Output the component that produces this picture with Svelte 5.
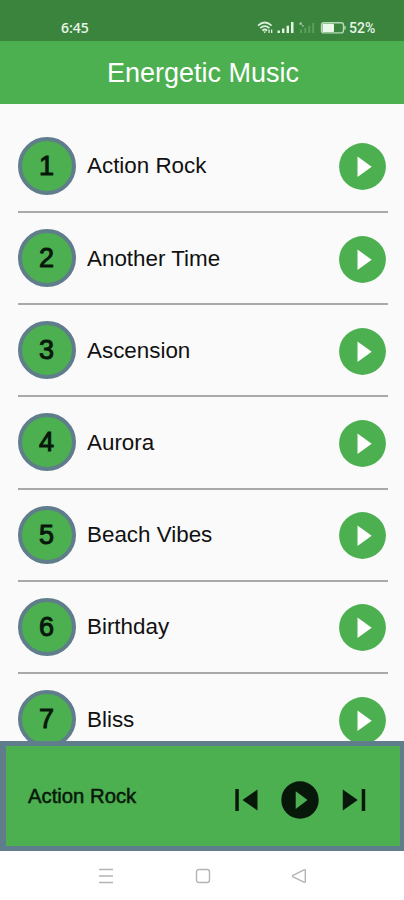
<script lang="ts">
  interface Track {
    id: number;
    title: string;
  }

  const tracks: Track[] = [
    'Action Rock',
    'Another Time',
    'Ascension',
    'Aurora',
    'Beach Vibes',
    'Birthday',
    'Bliss',
  ].map((title, i) => ({ id: i + 1, title }));

  let current = $state(tracks[0]);

  function step(delta: number) {
    const next = (current.id - 1 + delta + tracks.length) % tracks.length;
    current = tracks[next];
  }
</script>

<div class="screen">
  <div class="status-bar">
    <span class="clock">6:45</span>
    <svg class="indicators" width="90" height="16" viewBox="0 0 90 16" aria-hidden="true">
      <!-- wifi -->
      <g fill="none" stroke="#d9efd9" stroke-width="1.7">
        <path d="M1 5.6Q7.8-.6 14.6 5.6" />
        <path d="M3.2 8.2Q7.8 4 12.4 8.2" />
        <path d="M5.4 10.6Q7.8 8.4 10.2 10.6" />
      </g>
      <path d="M6.3 11.4h3L7.8 13.2zM11.4 9.5h1.3v3.6h-1.3zM14 9.5h1.3v3.6H14z" fill="#d9efd9" />
      <!-- signal, sim 1 -->
      <path d="M20.5 10.5h2.4V13h-2.4zM25 8.5h2.4V13H25zM29.6 5.8H32V13h-2.4zM34 2H36.5V13H34z" fill="#e1f3e1" />
      <!-- signal, sim 2 -->
      <path d="M42.5 2.5h2.3v2.3h-2.3zM45 5h1.6v1.6H45z" fill="#a8d0a8" />
      <path d="M43 9.5h2V13h-2zM47.3 8h2v5h-2zM51.3 5.8h2V13h-2zM55.2 3h2v10h-2z" fill="#5c9f5d" />
      <!-- battery -->
      <rect x="64.5" y="2.7" width="22" height="10.2" rx="2.4" fill="none" stroke="#b5dab5" stroke-width="1.4" />
      <rect x="65.5" y="3.7" width="11.5" height="8.2" rx="1" fill="#edf8ed" />
      <path d="M88 6v3.6" stroke="#b5dab5" stroke-width="1.4" />
    </svg>
    <span class="battery">52%</span>
  </div>

  <header class="app-bar">
    <h1>Energetic Music</h1>
  </header>

  <main class="track-list">
    {#each tracks as track (track.id)}
      <div class="track">
        <span class="number">{track.id}</span>
        <span class="title">{track.title}</span>
        <button class="play" aria-label="Play {track.title}" onclick={() => (current = track)}>
          <svg width="47" height="47" viewBox="0 0 47 47">
            <circle cx="23.5" cy="23.5" r="23.4" fill="#4caf50" />
            <path d="M18.5 13.5v20.6L32.7 23.8z" fill="#fff" />
          </svg>
        </button>
      </div>
    {/each}
  </main>

  <footer class="player">
    <span class="now-playing">{current.title}</span>
    <div class="controls">
      <button aria-label="Previous" onclick={() => step(-1)}>
        <svg width="24" height="24" viewBox="0 0 24 24" fill="#07180a">
          <path d="M1.3 1H4.8v22H1.3zM23.5 1.5v21L8.5 12z" />
        </svg>
      </button>
      <button aria-label="Play">
        <svg width="38" height="38" viewBox="0 0 38 38" fill="#07180a" fill-rule="evenodd">
          <path d="M19 .3a18.7 18.7 0 1 0 0 37.4a18.7 18.7 0 1 0 0-37.4zM14.7 10.3v17.6L26.5 19.1z" />
        </svg>
      </button>
      <button aria-label="Next" onclick={() => step(1)}>
        <svg width="24" height="24" viewBox="0 0 24 24" fill="#07180a">
          <path d="M.8 1.5v21L15.7 12zM19.7 1h3.5v22h-3.5z" />
        </svg>
      </button>
    </div>
  </footer>

  <nav class="system-nav">
    <svg width="16" height="16" viewBox="0 0 16 16">
      <path d="M1 1.5h14M1 8h14M1 14.5h14" />
    </svg>
    <svg width="16" height="16" viewBox="0 0 16 16">
      <rect x="1.5" y="1.5" width="13" height="13" rx="2.4" />
    </svg>
    <svg width="16" height="16" viewBox="0 0 16 16">
      <path d="M14.3 2.6v10.8q0 1.4-1.3.8L2 8.8q-1-.8 0-1.5L13 1.8q1.3-.6 1.3.8z" />
    </svg>
  </nav>
</div>

<style>
  :global(body) {
    margin: 0;
    background: #fff;
  }

  .screen {
    display: flex;
    flex-direction: column;
    width: 404px;
    height: 900px;
    overflow: hidden;
    background: #fafafa;
    color: #111;
    font-family: 'Liberation Sans', Arial, sans-serif;
  }

  button {
    display: block;
    padding: 0;
    border: 0;
    background: none;
    cursor: pointer;
  }

  svg {
    display: block;
  }

  /* ── Status bar ── */
  .status-bar {
    display: flex;
    flex: none;
    align-items: center;
    box-sizing: border-box;
    height: 40.5px;
    padding: 16px 28px 0 61px;
    background: #3b843e;
    color: #e6f5e6;
  }

  .clock {
    flex: 1;
    font: 600 14px/20px 'Open Sans', sans-serif;
    letter-spacing: 0;
  }

  .indicators {
    margin-right: 2px;
  }

  .battery {
    width: 27px;
    font: 500 14px/20px Roboto, sans-serif;
    white-space: nowrap;
  }

  /* ── App bar ── */
  .app-bar {
    display: flex;
    flex: none;
    align-items: center;
    justify-content: center;
    box-sizing: border-box;
    height: 63px;
    padding: 2px 0 0 2px;
    background: #4caf50;
  }

  h1 {
    margin: 0;
    color: #fff;
    font-size: 27px;
    font-weight: 400;
    line-height: 31px;
  }

  /* ── Track list ── */
  .track-list {
    flex: 1;
    min-height: 0;
    overflow: hidden;
    padding: 17.3px 16.5px 0 17.5px;
  }

  .track {
    display: flex;
    align-items: center;
    box-sizing: border-box;
    height: 92.2px;
    border-bottom: 2px solid #a9a9a9;
  }

  .number {
    display: flex;
    flex: none;
    align-items: center;
    justify-content: center;
    box-sizing: border-box;
    width: 58px;
    height: 58px;
    padding-top: 1px;
    border: 4px solid #607d8b;
    border-radius: 50%;
    background: #4caf50;
    color: #07180a;
    font-size: 27px;
    -webkit-text-stroke: 1px #07180a;
  }

  .title {
    flex: 1;
    margin-left: 11.5px;
    padding-top: 1px;
    font-size: 22.4px;
  }

  .play {
    margin: 2px 2px 0 0;
  }

  /* ── Player ── */
  .player {
    display: flex;
    flex: none;
    align-items: center;
    justify-content: space-between;
    box-sizing: border-box;
    height: 110px;
    padding: 0 34px 0 22px;
    border: solid #607d8b;
    border-width: 5px 4px 5px 6px;
    background: #4caf50;
  }

  .now-playing {
    padding-top: 1px;
    color: #07180a;
    font-size: 20.3px;
    -webkit-text-stroke: 0.5px #07180a;
  }

  .controls {
    display: flex;
    align-items: center;
    gap: 23px;
    margin-top: 8px;
  }

  /* ── System navigation ── */
  .system-nav {
    display: flex;
    flex: none;
    align-items: center;
    justify-content: center;
    gap: 80.5px;
    height: 49px;
    padding-left: 1px;
    background: #fff;
  }

  .system-nav svg {
    fill: none;
    stroke: #b4b4b4;
    stroke-width: 1.4;
  }
</style>
